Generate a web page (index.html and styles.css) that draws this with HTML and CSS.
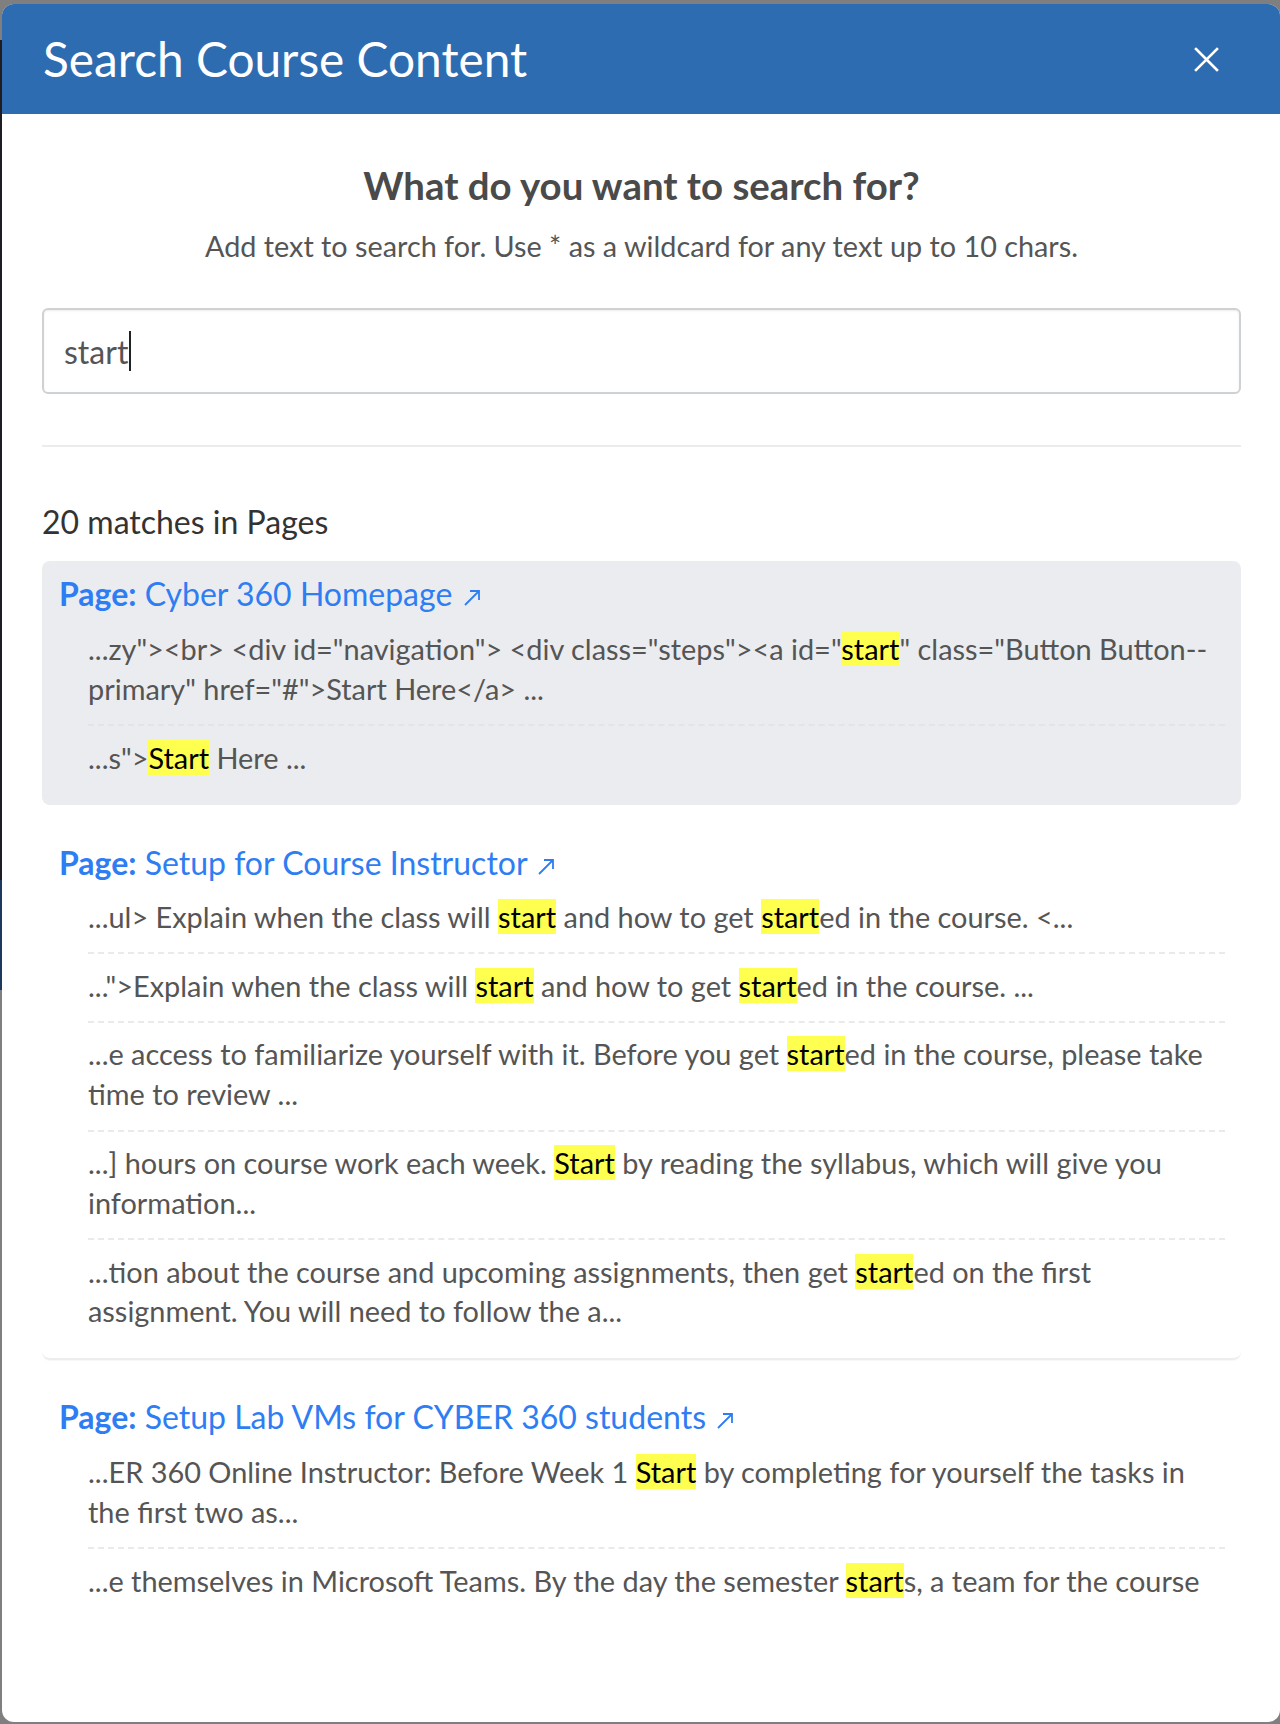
FILE: index.html
```html
<!DOCTYPE html>
<html lang="en">
<head>
<meta charset="utf-8">
<title>Search Course Content</title>
<link rel="stylesheet" href="styles.css">
</head>
<body>
<div class="modal">
  <header class="modal-header">
    <h1 class="modal-title">Search Course Content</h1>
    <button class="close-btn" aria-label="Close">
      <svg width="25" height="25" viewBox="0 0 25 25"><path d="M2 2 L23 23 M23 2 L2 23" stroke="#fff" stroke-width="2.6" stroke-linecap="square" fill="none"/></svg>
    </button>
  </header>
  <div class="modal-body">
    <div class="scroll">
      <h2 class="prompt">What do you want to search for?</h2>
      <p class="hint">Add text to search for. Use * as a wildcard for any text up to 10 chars.</p>
      <div class="search-box"><span class="query">start</span><span class="caret"></span></div>
      <hr class="divider">
      <h3 class="count">20 matches in Pages</h3>

      <div class="result result-hover">
        <a class="result-title" href="#"><b>Page:</b> Cyber 360 Homepage <svg class="ext" width="19" height="19" viewBox="0 0 19 19"><path d="M2 17 L16 3 M7 3 H16 V12" stroke="currentColor" stroke-width="1.8" fill="none"/></svg></a>
        <div class="snippets">
          <p class="snippet">...zy"&gt;&lt;br&gt; &lt;div id="navigation"&gt; &lt;div class="steps"&gt;&lt;a id="<mark>start</mark>" class="Button Button--primary" href="#"&gt;Start Here&lt;/a&gt; ...</p>
          <p class="snippet">...s"&gt;<mark>Start</mark> Here ...</p>
        </div>
      </div>

      <div class="result result-border">
        <a class="result-title" href="#"><b>Page:</b> Setup for Course Instructor <svg class="ext" width="19" height="19" viewBox="0 0 19 19"><path d="M2 17 L16 3 M7 3 H16 V12" stroke="currentColor" stroke-width="1.8" fill="none"/></svg></a>
        <div class="snippets">
          <p class="snippet">...ul&gt; Explain when the class will <mark>start</mark> and how to get <mark>start</mark>ed in the course. &lt;...</p>
          <p class="snippet">..."&gt;Explain when the class will <mark>start</mark> and how to get <mark>start</mark>ed in the course. ...</p>
          <p class="snippet">...e access to familiarize yourself with it. Before you get <mark>start</mark>ed in the course, please take time to review ...</p>
          <p class="snippet">...] hours on course work each week. <mark>Start</mark> by reading the syllabus, which will give you information...</p>
          <p class="snippet">...tion about the course and upcoming assignments, then get <mark>start</mark>ed on the first assignment. You will need to follow the a...</p>
        </div>
      </div>

      <div class="result">
        <a class="result-title" href="#"><b>Page:</b> Setup Lab VMs for CYBER 360 students <svg class="ext" width="19" height="19" viewBox="0 0 19 19"><path d="M2 17 L16 3 M7 3 H16 V12" stroke="currentColor" stroke-width="1.8" fill="none"/></svg></a>
        <div class="snippets">
          <p class="snippet">...ER 360 Online Instructor: Before Week 1 <mark>Start</mark> by completing for yourself the tasks in the first two as...</p>
          <p class="snippet">...e themselves in Microsoft Teams. By the day the semester <mark>start</mark>s, a team for the course will be created for you and your students...</p>
        </div>
      </div>
    </div>
  </div>
</div>
</body>
</html>
```

FILE: styles.css
```css
html, body {
  margin: 0;
  padding: 0;
}
body {
  width: 1280px;
  height: 1724px;
  overflow: hidden;
  background:
    linear-gradient(#1e1e22, #1e1e22) no-repeat 0 40px / 2px 840px,
    linear-gradient(#1d3a5c, #1d3a5c) no-repeat 0 880px / 2px 110px,
    #7f7f7f;
  font-family: Lato, "Open Sans", sans-serif;
}
.modal {
  margin: 4px 0 0 2px;
  width: 1278px;
  height: 1718px;
  background: #fff;
  border-radius: 12px;
  overflow: hidden;
  display: flex;
  flex-direction: column;
}
.modal-header {
  flex: 0 0 110px;
  background: #2e6cb2;
  display: flex;
  align-items: center;
  justify-content: space-between;
  padding: 0 61px 0 41px;
  box-sizing: border-box;
}
.modal-title {
  margin: 0;
  color: #fff;
  font-weight: 400;
  font-size: 47.8px;
  line-height: 58px;
}
.close-btn {
  background: none;
  border: 0;
  padding: 0;
  width: 25px;
  height: 25px;
  display: flex;
}
.modal-body {
  flex: 1;
  display: flex;
  flex-direction: column;
  padding: 0 39px 120px 40px;
  min-height: 0;
}
.scroll {
  flex: 1;
  overflow: hidden;
}
.prompt {
  margin: 48px 0 0;
  text-align: center;
  font-size: 38.4px;
  line-height: 46px;
  font-weight: 700;
  color: #4a4a4a;
}
.hint {
  margin: 21px 0 0;
  text-align: center;
  font-size: 28.8px;
  line-height: 34px;
  color: #555;
}
.search-box {
  margin-top: 45px;
  height: 86px;
  box-sizing: border-box;
  border: 2px solid #cfd2d4;
  border-radius: 6px;
  box-shadow: inset 0 1px 2px rgba(0,0,0,0.08);
  display: flex;
  align-items: center;
  padding-left: 20px;
  font-size: 32px;
  color: #555;
}
.caret {
  display: inline-block;
  width: 1.5px;
  height: 40px;
  background: #222;
  margin-left: 1px;
}
.divider {
  margin: 51px 0 0;
  border: 0;
  height: 2px;
  background: #ececec;
}
.count {
  margin: 55.6px 0 0;
  font-size: 32px;
  line-height: 38px;
  font-weight: 400;
  color: #333;
}
.result {
  margin-top: 26px;
  padding: 11.6px 16px 0 17px;
  border-radius: 8px;
}
.count + .result { margin-top: 20.4px; }
.result-hover {
  background: #ebecef;
}
.result-border {
  border-bottom: 2px solid #ededed;
  box-shadow: 0 1px 1px rgba(0,0,0,0.03);
}
.result-border + .result { margin-top: 24px; }
.result-title {
  display: block;
  font-size: 32px;
  line-height: 42px;
  color: #2f7df3;
  text-decoration: none;
}
.result-title b {
  font-weight: 700;
}
.ext {
  vertical-align: -1px;
  margin-left: 2px;
}
.snippets {
  margin: 14.4px 0 0 29px;
  display: flex;
  flex-direction: column;
}
.result-border .snippets {
  margin-top: 12.4px;
}
.snippet {
  margin: 0 0 11.4px;
  padding: 0 0 16px;
  font-size: 28.9px;
  line-height: 39.6px;
  color: #555;
  border-bottom: 2px dashed #eaeaea;
}
.result-hover .snippet {
  border-bottom-color: #e3e4e7;
}
.snippet:last-child {
  border-bottom: 0;
}
mark {
  background: #ffff50;
  color: #000;
}
```
